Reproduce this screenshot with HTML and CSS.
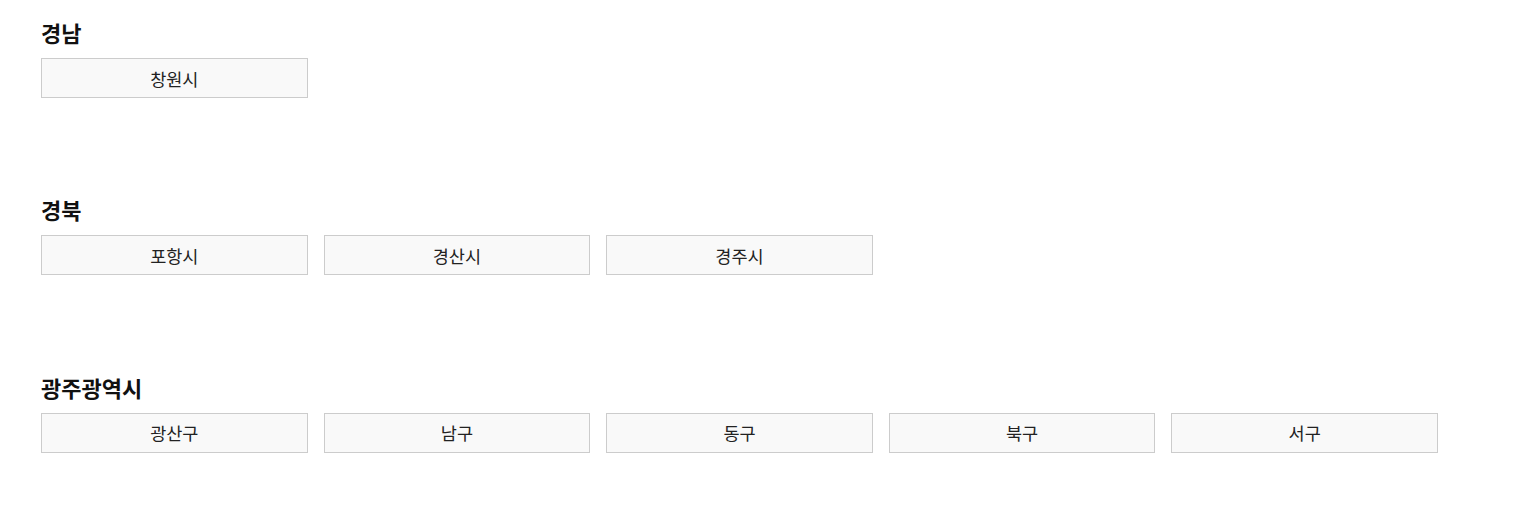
FILE: index.html
```html
<!DOCTYPE html>
<html lang="ko">
<head>
  <meta charset="UTF-8">
  <title>지역 선택</title>
  <link rel="stylesheet" href="styles.css">
</head>
<body>
  <div class="wrap">
    <div class="area">
      <h3 class="area-title">경남</h3>
      <div class="city-list">
        <button class="city">창원시</button>
      </div>
    </div>

    <div class="area">
      <h3 class="area-title">경북</h3>
      <div class="city-list">
        <button class="city">포항시</button>
        <button class="city">경산시</button>
        <button class="city">경주시</button>
      </div>
    </div>

    <div class="area">
      <h3 class="area-title">광주광역시</h3>
      <div class="city-list">
        <button class="city">광산구</button>
        <button class="city">남구</button>
        <button class="city">동구</button>
        <button class="city">북구</button>
        <button class="city">서구</button>
      </div>
    </div>
  </div>
</body>
</html>
```

FILE: styles.css
```css
*{
  margin:0;
  padding:0;
  box-sizing: border-box;
}
body {
  font-family: 'Noto Sans CJK KR', 'Noto Sans', sans-serif;
  background: #fff;
  color: #222;
}
.wrap{
  width: 1397px;
  margin-left: 41px;
  padding-top: 18px;
}
.area{
  margin-bottom: 97.4px;
}
.area:last-child{
  margin-bottom: 0;
}
.area-title{
  font-size: 22px;
  font-weight: 700;
  line-height: 28px;
  color: #111;
  margin-bottom: 12px;
}
.city-list{
  display: grid;
  grid-template-columns: repeat(5, 1fr);
  column-gap: 16px;
}
.city{
  height: 40px;
  background: #f9f9f9;
  border: 1px solid #cccccc;
  font-family: inherit;
  font-size: 17.5px;
  color: #222;
  cursor: pointer;
}
```
